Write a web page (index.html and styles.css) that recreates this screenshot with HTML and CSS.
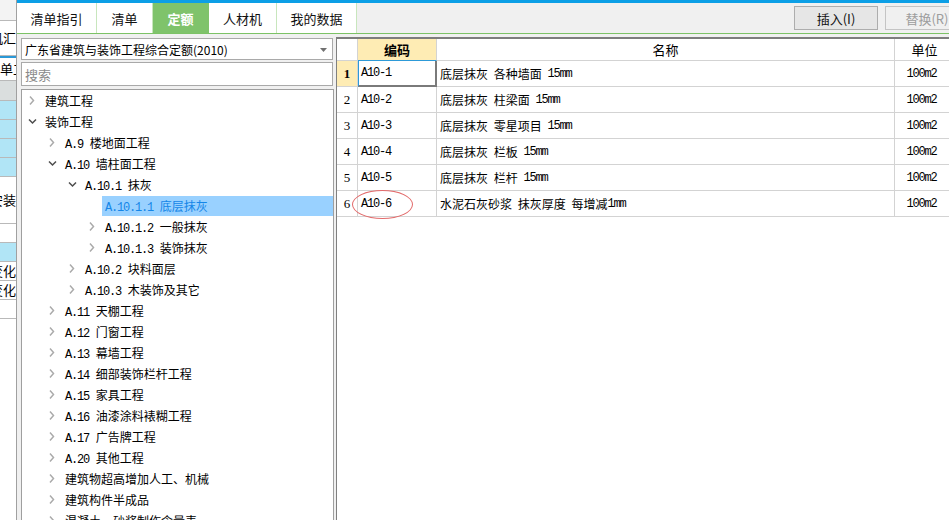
FILE: index.html
```html
<!DOCTYPE html>
<html lang="zh-CN">
<head>
<meta charset="utf-8">
<title>定额</title>
<link rel="stylesheet" href="styles.css">
</head>
<body>
<div class="page">
  <aside class="side">
    <div class="s-top"></div>
    <div class="s-cell s-h34 s-right"><span>机汇</span></div>
    <div class="s-blue"></div>
    <div class="s-cell s-h23"><span>单工</span></div>
    <div class="s-head"></div>
    <div class="s-row s-sel"></div>
    <div class="s-row s-sel"></div>
    <div class="s-row s-sel"></div>
    <div class="s-row s-sel"></div>
    <div class="s-cell s-h47 s-right"><span>安装</span></div>
    <div class="s-row"></div>
    <div class="s-row s-sel"></div>
    <div class="s-row s-right"><span>变化</span></div>
    <div class="s-row s-right"><span>变化</span></div>
    <div class="s-row"></div>
  </aside>

  <main class="win">
    <div class="tabbar">
      <div class="tab w80">清单指引</div>
      <div class="tab w55">清单</div>
      <div class="tab w56 active">定额</div>
      <div class="tab w68">人材机</div>
      <div class="tab w80">我的数据</div>
      <div class="actions">
        <button class="btn">插入(I)</button>
        <button class="btn disabled">替换(R)</button>
      </div>
    </div>

    <div class="content">
      <section class="left">
        <div class="select">
          <span>广东省建筑与装饰工程综合定额(2010)</span>
          <svg class="caret" width="7" height="4" viewBox="0 0 7 4"><path d="M0 0H7L3.5 4Z" fill="#707070"/></svg>
        </div>
        <div class="search">搜索</div>
        <ul class="tree">
          <li class="node l0"><span class="arr"><svg width="16" height="21"><path d="M2 6.5L5.5 10.5L2 14.5" class="cr"/></svg></span><span class="lbl">建筑工程</span></li>
          <li class="node l0"><span class="arr"><svg width="16" height="21"><path d="M1 8.5L4.5 12L8 8.5" class="cd"/></svg></span><span class="lbl">装饰工程</span></li>
          <li class="node l1"><span class="arr"><svg width="16" height="21"><path d="M2 6.5L5.5 10.5L2 14.5" class="cr"/></svg></span><span class="lbl"><span class="c">A.9</span> 楼地面工程</span></li>
          <li class="node l1"><span class="arr"><svg width="16" height="21"><path d="M1 8.5L4.5 12L8 8.5" class="cd"/></svg></span><span class="lbl"><span class="c">A.10</span> 墙柱面工程</span></li>
          <li class="node l2"><span class="arr"><svg width="16" height="21"><path d="M1 8.5L4.5 12L8 8.5" class="cd"/></svg></span><span class="lbl"><span class="c">A.10.1</span> 抹灰</span></li>
          <li class="node l3"><span class="arr"></span><span class="lbl sel"><span class="c">A.10.1.1</span> 底层抹灰</span></li>
          <li class="node l3"><span class="arr"><svg width="16" height="21"><path d="M2 6.5L5.5 10.5L2 14.5" class="cr"/></svg></span><span class="lbl"><span class="c">A.10.1.2</span> 一般抹灰</span></li>
          <li class="node l3"><span class="arr"><svg width="16" height="21"><path d="M2 6.5L5.5 10.5L2 14.5" class="cr"/></svg></span><span class="lbl"><span class="c">A.10.1.3</span> 装饰抹灰</span></li>
          <li class="node l2"><span class="arr"><svg width="16" height="21"><path d="M2 6.5L5.5 10.5L2 14.5" class="cr"/></svg></span><span class="lbl"><span class="c">A.10.2</span> 块料面层</span></li>
          <li class="node l2"><span class="arr"><svg width="16" height="21"><path d="M2 6.5L5.5 10.5L2 14.5" class="cr"/></svg></span><span class="lbl"><span class="c">A.10.3</span> 木装饰及其它</span></li>
          <li class="node l1"><span class="arr"><svg width="16" height="21"><path d="M2 6.5L5.5 10.5L2 14.5" class="cr"/></svg></span><span class="lbl"><span class="c">A.11</span> 天棚工程</span></li>
          <li class="node l1"><span class="arr"><svg width="16" height="21"><path d="M2 6.5L5.5 10.5L2 14.5" class="cr"/></svg></span><span class="lbl"><span class="c">A.12</span> 门窗工程</span></li>
          <li class="node l1"><span class="arr"><svg width="16" height="21"><path d="M2 6.5L5.5 10.5L2 14.5" class="cr"/></svg></span><span class="lbl"><span class="c">A.13</span> 幕墙工程</span></li>
          <li class="node l1"><span class="arr"><svg width="16" height="21"><path d="M2 6.5L5.5 10.5L2 14.5" class="cr"/></svg></span><span class="lbl"><span class="c">A.14</span> 细部装饰栏杆工程</span></li>
          <li class="node l1"><span class="arr"><svg width="16" height="21"><path d="M2 6.5L5.5 10.5L2 14.5" class="cr"/></svg></span><span class="lbl"><span class="c">A.15</span> 家具工程</span></li>
          <li class="node l1"><span class="arr"><svg width="16" height="21"><path d="M2 6.5L5.5 10.5L2 14.5" class="cr"/></svg></span><span class="lbl"><span class="c">A.16</span> 油漆涂料裱糊工程</span></li>
          <li class="node l1"><span class="arr"><svg width="16" height="21"><path d="M2 6.5L5.5 10.5L2 14.5" class="cr"/></svg></span><span class="lbl"><span class="c">A.17</span> 广告牌工程</span></li>
          <li class="node l1"><span class="arr"><svg width="16" height="21"><path d="M2 6.5L5.5 10.5L2 14.5" class="cr"/></svg></span><span class="lbl"><span class="c">A.20</span> 其他工程</span></li>
          <li class="node l1"><span class="arr"><svg width="16" height="21"><path d="M2 6.5L5.5 10.5L2 14.5" class="cr"/></svg></span><span class="lbl">建筑物超高增加人工、机械</span></li>
          <li class="node l1"><span class="arr"><svg width="16" height="21"><path d="M2 6.5L5.5 10.5L2 14.5" class="cr"/></svg></span><span class="lbl">建筑构件半成品</span></li>
          <li class="node l1"><span class="arr"><svg width="16" height="21"><path d="M2 6.5L5.5 10.5L2 14.5" class="cr"/></svg></span><span class="lbl">混凝土、砂浆制作含量表</span></li>
        </ul>
      </section>

      <section class="grid-panel">
        <div class="grid">
          <div class="hd num"></div>
          <div class="hd code-h">编码</div>
          <div class="hd ctr">名称</div>
          <div class="hd ctr">单位</div>

          <div class="cell num cur">1</div>
          <div class="cell code focus">A10-1</div>
          <div class="cell name">底层抹灰 各种墙面 <span class="m">15mm</span></div>
          <div class="cell unit">100m2</div>

          <div class="cell num">2</div>
          <div class="cell code">A10-2</div>
          <div class="cell name">底层抹灰 柱梁面 <span class="m">15mm</span></div>
          <div class="cell unit">100m2</div>

          <div class="cell num">3</div>
          <div class="cell code">A10-3</div>
          <div class="cell name">底层抹灰 零星项目 <span class="m">15mm</span></div>
          <div class="cell unit">100m2</div>

          <div class="cell num">4</div>
          <div class="cell code">A10-4</div>
          <div class="cell name">底层抹灰 栏板 <span class="m">15mm</span></div>
          <div class="cell unit">100m2</div>

          <div class="cell num">5</div>
          <div class="cell code">A10-5</div>
          <div class="cell name">底层抹灰 栏杆 <span class="m">15mm</span></div>
          <div class="cell unit">100m2</div>

          <div class="cell num">6</div>
          <div class="cell code">A10-6</div>
          <div class="cell name">水泥石灰砂浆 抹灰厚度 每增减<span class="m">1mm</span></div>
          <div class="cell unit">100m2</div>
        </div>
        <div class="mark"></div>
      </section>
    </div>
  </main>
</div>
</body>
</html>
```

FILE: styles.css
```css
* { box-sizing: border-box; }
html, body { margin: 0; padding: 0; }
body {
  width: 949px;
  height: 520px;
  overflow: hidden;
  font-family: "Noto Sans CJK SC", "Liberation Sans", sans-serif;
  font-size: 12px;
  color: #000;
  background: #f0f0f0;
}
.page { display: flex; width: 949px; height: 520px; }

/* background window strip */
.side {
  width: 17px;
  flex: none;
  background: #fff;
  border-right: 1px solid #a0a0a0;
  overflow: hidden;
  display: flex;
  flex-direction: column;
}
.side > div { flex: none; border-bottom: 1px solid #b9b9b9; overflow: hidden; white-space: nowrap; display: flex; align-items: center; font-size: 13px; line-height: 14px; }
.s-top { height: 21px; background: #f3f3f3; }
.s-h34 { height: 35px; }
.s-blue { height: 2px; background: #2a98d6; border-bottom: 0 !important; }
.s-h23 { height: 23px; }
.s-head { height: 20px; background: #dadede; }
.s-row { height: 19px; }
.s-sel { background: #b1e5f6; }
.s-h47 { height: 47px; }
.s-right { justify-content: flex-end; }

/* main window */
.win {
  flex: 1;
  min-width: 0;
  border-top: 3px solid #0c9fe6;
  display: flex;
  flex-direction: column;
  background: #f0f0f0;
}
.tabbar {
  height: 31px;
  flex: none;
  display: flex;
  border-bottom: 1px solid #7cc266;
}
.tab {
  height: 30px;
  background: #fff;
  border-right: 1px solid #c8e6bd;
  display: flex;
  align-items: center;
  justify-content: center;
  font-size: 13px;
  color: #111;
}
.tab.active { background: #7fc36b; color: #fff; font-weight: bold; border-right-color: #7fc36b; }
.w80 { width: 80px; }
.w55 { width: 56px; }
.w56 { width: 56px; }
.w68 { width: 68px; }
.actions { margin-left: auto; display: flex; gap: 7px; padding-top: 3px; margin-right: -20px; }
.btn {
  width: 84px;
  height: 24px;
  border: 1px solid #adadad;
  background: #e6e6e6;
  font-family: "Noto Sans CJK SC", sans-serif;
  font-size: 13px;
  color: #111;
  padding: 0;
}
.btn.disabled { color: #9d9d9d; border-color: #c4c4c4; background: #f0f0f0; }

.content { flex: 1; display: flex; min-height: 0; }

.left {
  width: 316px;
  flex: none;
  padding: 4px 0 0 4px;
  display: flex;
  flex-direction: column;
  gap: 2px;
}
.select {
  height: 22px;
  width: 312px;
  border: 1px solid #a9a9a9;
  background: #fff;
  display: flex;
  align-items: center;
  justify-content: space-between;
  padding: 0 5px 0 3px;
}
.select .caret { margin-top: 1px; }
.search {
  height: 24px;
  width: 312px;
  border: 1px solid #a9a9a9;
  background: #fff;
  color: #8a8a8a;
  display: flex;
  align-items: center;
  padding-left: 3px;
  font-size: 13px;
}
.tree {
  list-style: none;
  margin: 1px 0 0 0;
  padding: 0;
  width: 313px;
  flex: 1;
  background: #fff;
  border: 1px solid #9f9f9f;
  border-bottom: 0;
  overflow: hidden;
}
.node { height: 21px; display: flex; align-items: center; white-space: nowrap; }
.l0 { padding-left: 6px; }
.l1 { padding-left: 26px; }
.l2 { padding-left: 46px; }
.l3 { padding-left: 66px; }
.arr { width: 16px; height: 21px; flex: none; display: block; }
.arr svg { display: block; }
.cr { fill: none; stroke: #ababab; stroke-width: 1.5; }
.cd { fill: none; stroke: #4d4d4d; stroke-width: 1.5; }
.lbl { padding: 0 3px; margin-left: -2px; height: 20px; line-height: 20px; }
.lbl.sel { flex: 1; background: #99d1ff; color: #1486e8; }
.c { font-family: "Liberation Mono", monospace; font-size: 12px; letter-spacing: -1.2px; margin-right: 4px; }

/* table */
.grid-panel {
  flex: 1;
  position: relative;
  margin: 3px 0 0 3px;
  background: #fff;
  border-top: 2px solid #7d7d7d;
  border-left: 1px solid #808080;
  overflow: hidden;
}
.grid {
  display: grid;
  grid-template-columns: 21px 79px 458px 60px;
  grid-template-rows: 22px repeat(6, 26px);
}
.hd, .cell {
  border-right: 1px solid #d3d3d3;
  border-bottom: 1px solid #d3d3d3;
  display: flex;
  align-items: center;
  white-space: pre;
  overflow: hidden;
}
.hd { font-size: 13px; }
.ctr { justify-content: center; }
.code-h { justify-content: center; background: #feecb4; font-weight: bold; border-bottom-color: #2d9ad8; }
.num { justify-content: center; font-family: "Liberation Serif", serif; font-size: 13px; }
.num.cur { background: #feecb4; font-weight: bold; }
.code { padding-left: 3px; font-family: "Liberation Mono", monospace; font-size: 12px; letter-spacing: -1.2px; }
.code.focus { border-left: 1px solid #2d9ad8; border-right: 2px solid #7a7a7a; border-bottom: 2px solid #7a7a7a; padding-left: 2px; }
.name { padding-left: 3px; font-size: 12px; word-spacing: 3px; }
.m { font-family: "Liberation Mono", monospace; font-size: 12px; letter-spacing: -1.2px; word-spacing: 0; }
.unit { justify-content: center; padding-right: 6px; font-family: "Liberation Mono", monospace; font-size: 12px; letter-spacing: -1.2px; }

.mark {
  position: absolute;
  left: 15px;
  top: 151px;
  width: 61px;
  height: 29px;
  border: 1px solid #e26a6a;
  border-radius: 50%;
}
```
